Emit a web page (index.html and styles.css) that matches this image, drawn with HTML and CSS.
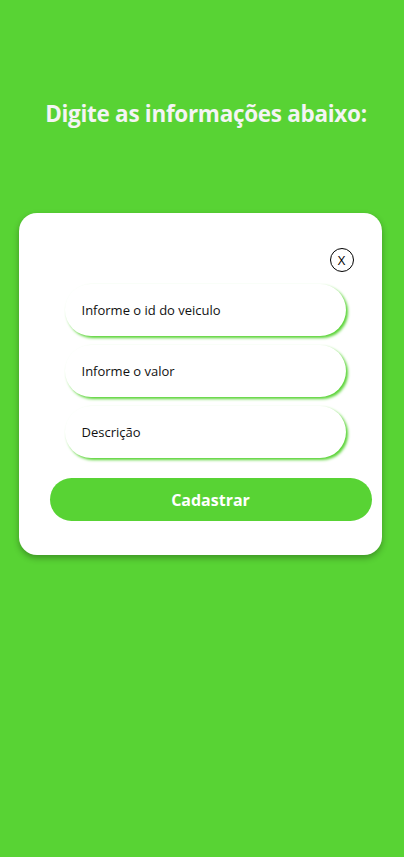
FILE: index.html
```html
<!DOCTYPE html>
<html lang="pt-BR">
<head>
<meta charset="utf-8">
<title>Cadastro</title>
<link rel="stylesheet" href="styles.css">
</head>
<body>
<main class="page">
  <h1 class="title">Digite as informações abaixo:</h1>
  <section class="card">
    <div class="close-row">
      <button class="close" type="button">X</button>
    </div>
    <div class="fields">
      <div class="field">Informe o id do veiculo</div>
      <div class="field">Informe o valor</div>
      <div class="field">Descrição</div>
    </div>
    <button class="submit" type="button">Cadastrar</button>
  </section>
</main>
</body>
</html>
```
FILE: styles.css
```css
html, body {
  margin: 0;
  padding: 0;
  background: #58d334;
  height: 100%;
}
body {
  font-family: "Open Sans", "Noto Sans", sans-serif;
}
.page {
  display: flex;
  flex-direction: column;
  align-items: center;
  padding-top: 97px;
}
.title {
  margin: 0;
  color: #f4f4f4;
  font-size: 22.5px;
  font-weight: 700;
  line-height: 34px;
  letter-spacing: -0.3px;
  padding-left: 8px;
}
.card {
  margin-top: 82px;
  width: 363px;
  margin-left: -4px;
  box-sizing: border-box;
  background: #fff;
  border-radius: 18px;
  box-shadow: 0 3px 6px rgba(0, 0, 0, 0.3);
  padding: 35px 10px 34px 31px;
  display: flex;
  flex-direction: column;
}
.close-row {
  display: flex;
  justify-content: flex-end;
  padding-right: 18px;
}
.close {
  width: 24px;
  height: 24px;
  border-radius: 50%;
  border: 1.5px solid #000;
  background: #fff;
  color: #000;
  font-family: "Open Sans", sans-serif;
  font-size: 13px;
  line-height: 1;
  padding: 0;
  display: flex;
  align-items: center;
  justify-content: center;
}
.fields {
  display: flex;
  flex-direction: column;
  gap: 9px;
  margin-top: 12px;
  padding-left: 15px;
}
.field {
  width: 281px;
  height: 52px;
  box-sizing: border-box;
  border-radius: 26px;
  background: #fff;
  box-shadow: 2px 2px 3px #58d334;
  padding-left: 17px;
  display: flex;
  align-items: center;
  font-size: 13px;
  color: #111;
}
.submit {
  margin-top: 20px;
  width: 322px;
  height: 43px;
  border: none;
  border-radius: 22px;
  background: #58d334;
  color: #fff;
  font-family: "Open Sans", sans-serif;
  font-weight: 700;
  font-size: 16px;
  padding: 0;
}
```
